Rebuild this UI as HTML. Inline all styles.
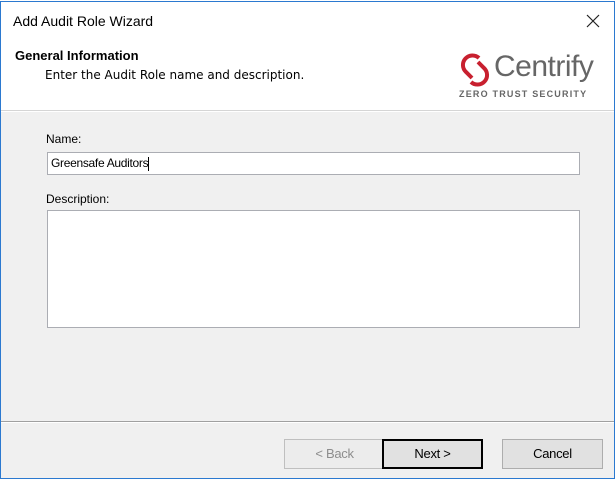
<!DOCTYPE html>
<html><head><style>
*{margin:0;padding:0;box-sizing:border-box}
body{width:616px;height:481px;background:#fff;position:relative;overflow:hidden;font-family:"Liberation Sans",sans-serif}
.win{position:absolute;left:0;top:1px;width:615px;height:478px;border:1px solid #2b79d0;background:#f0f0f0}
.abs{position:absolute}
.btn{position:absolute;top:437px;height:30px;width:101px;border:1px solid #adadad;background:#e1e1e1;font-size:13px;text-align:center;line-height:28px;color:#000;letter-spacing:-0.3px}
</style></head><body>
<div class="win">
 <div class="abs" style="left:0;top:0;width:613px;height:108px;background:#fff"></div>
 <div class="abs" style="left:0;top:108px;width:613px;height:1px;background:#d5d5d5"></div>
 <div class="abs" style="left:0;top:109px;width:613px;height:1px;background:#fff"></div>
 <div class="abs" style="left:12px;top:11px;font-size:14px;color:#000">Add Audit Role Wizard</div>
 <svg class="abs" style="left:585px;top:12px" width="14" height="14"><path d="M1 1L13 13M13 1L1 13" stroke="#222" stroke-width="1.2"/></svg>
 <div class="abs" style="left:14px;top:46px;font-size:13px;font-weight:bold;color:#000">General Information</div>
 <div class="abs" style="left:44px;top:66px;color:#000;font-family:'DejaVu Sans',sans-serif;font-size:12px">Enter the Audit Role name and description.</div>
 <svg class="abs" style="left:456px;top:50px" width="36" height="36" viewBox="0 0 36 36">
  <path d="M22 6 A9.5 9.5 0 1 0 9 20 L15 26" fill="none" stroke="#c8202f" stroke-width="4"/>
  <path d="M14 30 A9.5 9.5 0 1 0 27 16 L21 10" fill="none" stroke="#c8202f" stroke-width="4"/>
 </svg>
 <div class="abs" style="left:493px;top:48px;font-size:30px;color:#666;letter-spacing:-0.5px">Centrify</div>
 <div class="abs" style="left:458px;top:87px;font-size:9px;font-weight:bold;color:#666;letter-spacing:1.2px">ZERO TRUST SECURITY</div>
 <div class="abs" style="left:45px;top:130px;font-size:12px;color:#000">Name:</div>
 <div class="abs" style="left:46px;top:150px;width:533px;height:23px;border:1px solid #abadb3;background:#fff;font-size:12px;line-height:21px;padding-left:3px;letter-spacing:-0.3px">Greensafe Auditors<span style="display:inline-block;width:1px;height:14px;background:#000;vertical-align:middle"></span></div>
 <div class="abs" style="left:45px;top:190px;font-size:12px;color:#000">Description:</div>
 <div class="abs" style="left:46px;top:208px;width:533px;height:118px;border:1px solid #abadb3;background:#fff"></div>
 <div class="abs" style="left:0;top:419px;width:613px;height:1px;background:#a0a0a0"></div>
 <div class="abs" style="left:0;top:420px;width:613px;height:1px;background:#fff"></div>
 <div class="btn" style="left:283px;border-color:#bfbfbf;background:#ececec;color:#8d8d8d">&lt; Back</div>
 <div class="btn" style="left:381px;border:2px solid #000;line-height:26px">Next &gt;</div>
 <div class="btn" style="left:501px">Cancel</div>
</div>
</body></html>
